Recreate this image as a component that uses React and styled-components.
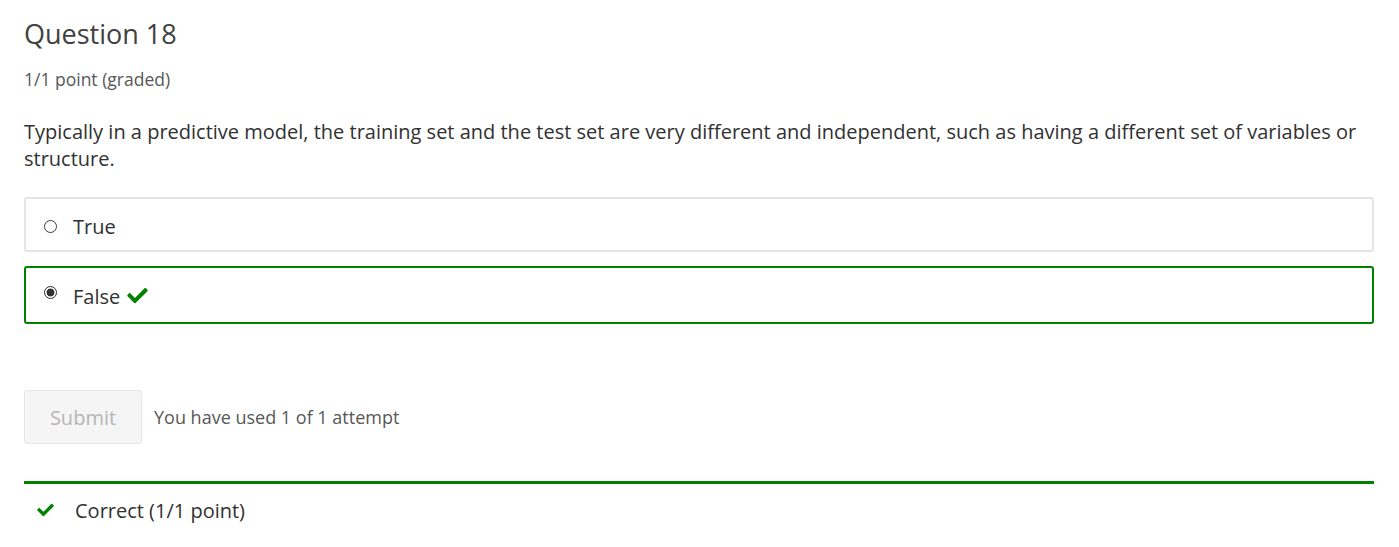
import React from "react";
import styled, { createGlobalStyle } from "styled-components";

const GlobalStyle = createGlobalStyle`
  body {
    margin: 0;
    background: #fff;
    font-family: "Open Sans", "Liberation Sans", sans-serif;
  }
`;

const Page = styled.div`
  padding: 16px 25px 0 24px;
  color: #313131;
`;

const Title = styled.h3`
  margin: 0;
  font-size: 27px;
  font-weight: 400;
  line-height: 36px;
  color: #414141;
`;

const Points = styled.div`
  margin-top: 15px;
  font-size: 17.5px;
  line-height: 24px;
  color: #575757;
`;

const Prompt = styled.p`
  margin: 27px 0 0;
  font-size: 20px;
  line-height: 27px;
  color: #313131;
`;

const Choices = styled.div`
  margin-top: 25px;
  display: flex;
  flex-direction: column;
  gap: 14px;
`;

const Choice = styled.label`
  display: flex;
  align-items: center;
  height: ${(p) => (p.$correct ? "58px" : "55px")};
  box-sizing: border-box;
  padding: 3px 18px 0;
  border: 2px solid ${(p) => (p.$correct ? "#008100" : "#e4e4e4")};
  border-radius: 3px;
  font-size: 20px;
  color: #313131;
`;

const Radio = styled.input`
  appearance: none;
  margin: 0 16px 0 0;
  width: 13px;
  height: 13px;
  box-sizing: border-box;
  border: 1px solid #3a3a3a;
  border-radius: 50%;
  background: #fff;
  position: relative;
  top: ${(p) => (p.$up ? "-4px" : "0")};

  &:checked {
    border-color: #2a2a2a;
    background: radial-gradient(circle, #333 0 3.6px, #fff 4.3px);
  }
`;

const Check = ({ size = 20, className }) => (
  <svg
    className={className}
    width={size}
    height={size * 0.8}
    viewBox="0 40 512 420"
    fill="#008100"
  >
    <path d="M173.898 439.404l-166.4-166.4c-9.997-9.997-9.997-26.206 0-36.204l36.203-36.204c9.997-9.998 26.207-9.998 36.204 0L192 312.69 432.095 72.596c9.997-9.997 26.207-9.997 36.204 0l36.203 36.204c9.997 9.997 9.997 26.206 0 36.204l-294.4 294.401c-9.998 9.997-26.207 9.997-36.204-.001z" />
  </svg>
);

const InlineCheck = styled(Check)`
  margin-left: 7px;
  margin-top: -2px;
`;

const ActionRow = styled.div`
  margin-top: 66px;
  display: flex;
  align-items: center;
  gap: 12px;
`;

const SubmitButton = styled.button`
  width: 118px;
  height: 54px;
  border: 1px solid #e6e6e6;
  border-radius: 3px;
  background: #f5f5f5;
  color: #b5b5b5;
  font-family: inherit;
  font-size: 20px;
  padding-top: 2px;
  cursor: default;
`;

const Attempts = styled.span`
  font-size: 18px;
  color: #575757;
`;

const Feedback = styled.div`
  margin-top: 37px;
  border-top: 3px solid #008100;
  display: flex;
  align-items: center;
  height: 52px;
  padding-left: 13px;
  gap: 21px;
  font-size: 20px;
  color: #313131;
`;

export default function App() {
  return (
    <>
      <GlobalStyle />
      <Page>
        <Title>Question 18</Title>
        <Points>1/1 point (graded)</Points>
        <Prompt>
          Typically in a predictive model, the training set and the test set
          are very different and independent, such as having a different set
          of variables or structure.
        </Prompt>
        <Choices>
          <Choice>
            <Radio type="radio" name="q18" />
            True
          </Choice>
          <Choice $correct>
            <Radio type="radio" name="q18" defaultChecked $up />
            False
            <InlineCheck size={21} />
          </Choice>
        </Choices>
        <ActionRow>
          <SubmitButton disabled>Submit</SubmitButton>
          <Attempts>You have used 1 of 1 attempt</Attempts>
        </ActionRow>
        <Feedback>
          <Check size={17} />
          Correct (1/1 point)
        </Feedback>
      </Page>
    </>
  );
}
